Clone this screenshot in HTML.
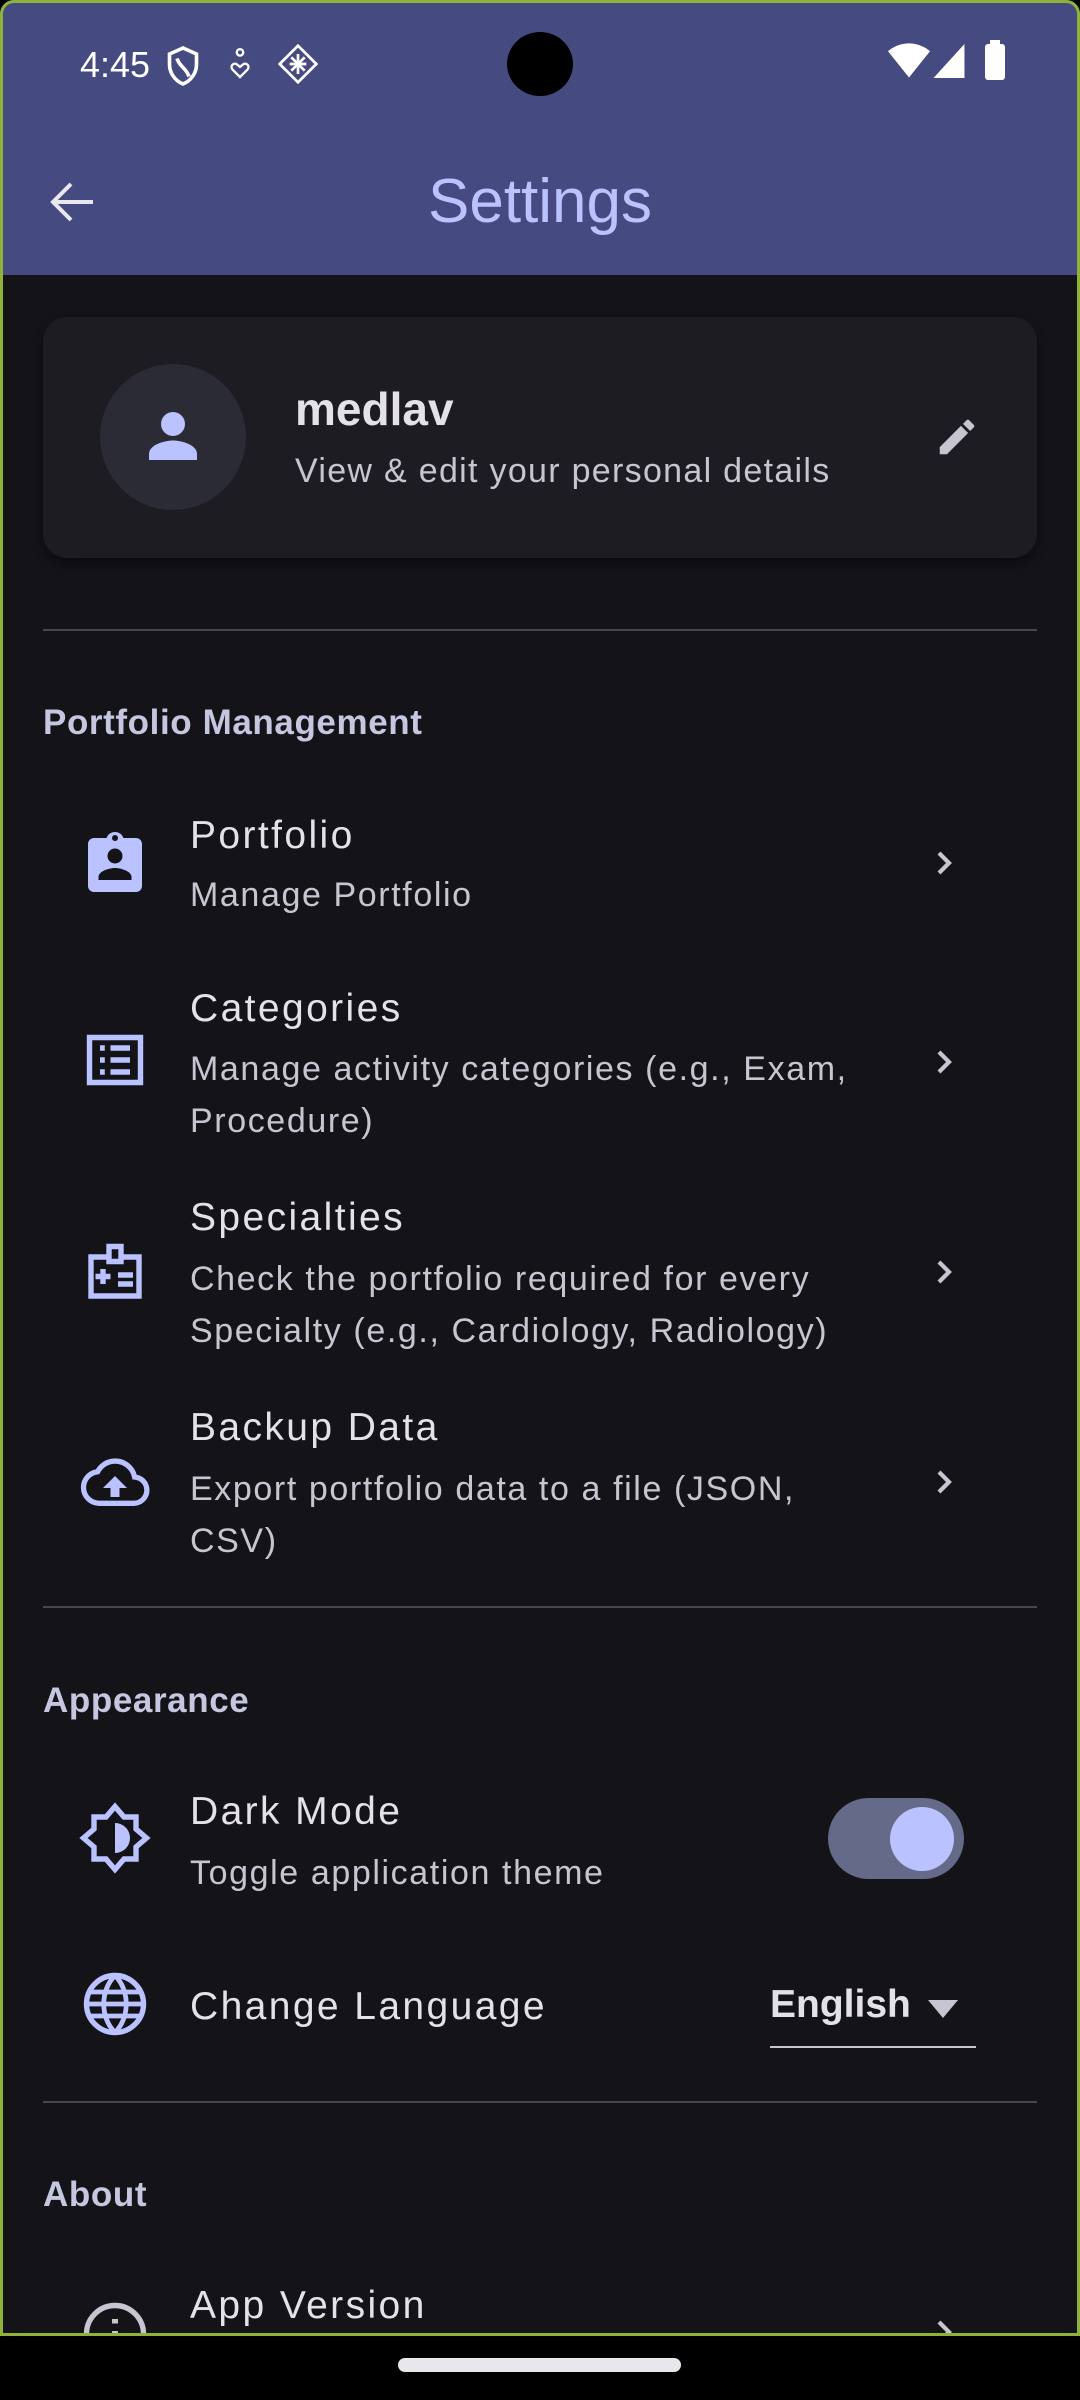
<!DOCTYPE html>
<html><head><meta charset="utf-8"><style>
*{margin:0;padding:0;box-sizing:border-box}
body{width:1080px;height:2400px;background:#000;position:relative;overflow:hidden;font-family:"Liberation Sans",sans-serif}
.screen{position:absolute;left:0;top:0;width:1080px;height:2336px;background:#141318;border-radius:14px 14px 0 0;overflow:hidden}
.frame{position:absolute;left:0;top:0;width:1080px;height:2336px;border:3px solid #8fb339;border-radius:14px 14px 0 0}
.bar{position:absolute;left:0;top:0;width:1080px;height:275px;background:#454b80}
.a{position:absolute;white-space:nowrap}
.t{font-size:39px;color:#e5e1e9;letter-spacing:2.4px;margin-top:3px}
.s{font-size:34px;color:#c7c5d0;letter-spacing:1.6px;line-height:52px;margin-top:3px}
.h{font-size:35px;color:#c5c6e0;font-weight:bold;left:43px;letter-spacing:0.6px;margin-top:3px}
.div{position:absolute;left:43px;width:994px;height:2px;background:#46464f}
.ic{position:absolute;left:79px;width:72px;height:72px}
.ch{position:absolute;left:924px;width:40px;height:40px}
</style></head><body>
<div class="screen">
<div class="bar"></div>
<div class="a" style="left:80px;top:44px;font-size:36px;color:#fff">4:45</div>
<svg class="a" style="left:165px;top:46px" width="36" height="40" viewBox="0 0 24 26"><path d="M12 1L3 5v7c0 6 4 11 9 13 5-2 9-7 9-13V5z M8 8c2 6 6 6 8 12" fill="none" stroke="#fff" stroke-width="2.4"/></svg>
<svg class="a" style="left:228px;top:48px" width="24" height="32" viewBox="0 0 16 22"><circle cx="8" cy="3" r="2.2" fill="none" stroke="#fff" stroke-width="1.6"/><path d="M8 20l-5-5c-2-2 0-5 2.5-4L8 13l2.5-2c2.5-1 4.5 2 2.5 4z" fill="none" stroke="#fff" stroke-width="1.6"/></svg>
<svg class="a" style="left:278px;top:44px" width="40" height="40" viewBox="0 0 24 24"><path d="M12 1L23 12 12 23 1 12z M7 12h10 M12 6v12 M8 8l8 8 M16 8l-8 8" fill="none" stroke="#fff" stroke-width="1.6"/></svg>
<div class="a" style="left:507px;top:32px;width:66px;height:64px;border-radius:50%;background:#000"></div>
<svg class="a" style="left:888px;top:42px" width="42" height="36" viewBox="0 0 24 20"><path d="M0 5C7-1 17-1 24 5L12 20z" fill="#fff"/></svg>
<svg class="a" style="left:933px;top:44px" width="32" height="34" viewBox="0 0 20 22"><path d="M20 0V22H0z" fill="#fff"/></svg>
<div class="a" style="left:985px;top:44px;width:20px;height:36px;background:#fff;border-radius:3px"></div>
<div class="a" style="left:990px;top:40px;width:10px;height:6px;background:#fff"></div>
<svg class="a" style="left:49px;top:180px" width="48" height="44" viewBox="0 0 24 22"><path d="M22 11H3 M11 2L2 11l9 9" fill="none" stroke="#e8e8f0" stroke-width="2"/></svg>
<div class="a" style="left:0;width:1080px;text-align:center;top:166px;font-size:62px;color:#bac3ff">Settings</div>

<div class="a" style="left:43px;top:317px;width:994px;height:241px;background:#1d1c22;border-radius:24px;box-shadow:0 6px 10px rgba(0,0,0,.4)"></div>
<div class="a" style="left:100px;top:364px;width:146px;height:146px;border-radius:50%;background:#2b2b35"></div>
<svg class="a" style="left:137px;top:400px" width="72" height="72" viewBox="0 0 24 24"><circle cx="12" cy="8" r="4" fill="#bac3ff"/><path d="M4 20v-2c0-3 5-4.5 8-4.5s8 1.5 8 4.5v2z" fill="#bac3ff"/></svg>
<div class="a" style="left:295px;top:382px;font-size:46px;font-weight:bold;color:#e5e1e9">medlav</div>
<div class="a" style="left:295px;top:452px;font-size:34px;color:#c7c5d0;letter-spacing:1.3px">View &amp; edit your personal details</div>
<svg class="a" style="left:934px;top:414px" width="46" height="46" viewBox="0 0 24 24"><path d="M3 17.25V21h3.75L17.8 9.94l-3.75-3.75z M20.7 7.04a1 1 0 000-1.41l-2.34-2.34a1 1 0 00-1.41 0l-1.83 1.83 3.75 3.75z" fill="#c7c5d0"/></svg>

<div class="div" style="top:629px"></div>
<div class="a h" style="top:700px">Portfolio Management</div>

<svg class="ic" style="top:826px" viewBox="0 0 24 24"><path d="M19 4h-4.2c-.4-1.2-1.5-2-2.8-2s-2.4.8-2.8 2H5c-1.1 0-2 .9-2 2v14c0 1.1.9 2 2 2h14c1.1 0 2-.9 2-2V6c0-1.1-.9-2-2-2z" fill="#bac3ff"/><circle cx="12" cy="4" r="1" fill="#141318"/><circle cx="12" cy="10" r="2.5" fill="#141318"/><path d="M6.5 18v-1c0-2 3.7-3 5.5-3s5.5 1 5.5 3v1z" fill="#141318"/></svg>
<div class="a t" style="left:190px;top:811px">Portfolio</div>
<div class="a s" style="left:190px;top:866px">Manage Portfolio</div>
<svg class="ch" style="top:843px" viewBox="0 0 24 24"><path d="M9 6l6 6-6 6" fill="none" stroke="#c7c5d0" stroke-width="2.5"/></svg>

<svg class="ic" style="top:1024px" viewBox="0 0 24 24"><path d="M3.5 4.5h17v15h-17z M7 8h1.6 M10.5 8h6.5 M7 12h1.6 M10.5 12h6.5 M7 16h1.6 M10.5 16h6.5" fill="none" stroke="#bac3ff" stroke-width="1.8"/></svg>
<div class="a t" style="left:190px;top:984px">Categories</div>
<div class="a s" style="left:190px;top:1040px">Manage activity categories (e.g., Exam,<br>Procedure)</div>
<svg class="ch" style="top:1042px" viewBox="0 0 24 24"><path d="M9 6l6 6-6 6" fill="none" stroke="#c7c5d0" stroke-width="2.5"/></svg>

<svg class="ic" style="top:1236px" viewBox="0 0 24 24"><path d="M10 7H4v13h16V7h-6 M10 3.5h4v5h-4z M5.5 13.5h5 M8 11v5 M13 13h5 M13 16h5" fill="none" stroke="#bac3ff" stroke-width="1.8"/></svg>
<div class="a t" style="left:190px;top:1193px">Specialties</div>
<div class="a s" style="left:190px;top:1250px">Check the portfolio required for every<br>Specialty (e.g., Cardiology, Radiology)</div>
<svg class="ch" style="top:1252px" viewBox="0 0 24 24"><path d="M9 6l6 6-6 6" fill="none" stroke="#c7c5d0" stroke-width="2.5"/></svg>

<svg class="ic" style="top:1446px" viewBox="0 0 24 24"><path d="M19.35 10.04A7.49 7.49 0 0012 4C9.11 4 6.6 5.64 5.35 8.04A6 6 0 000 14c0 3.31 2.690 6 6 6h13c2.76 0 5-2.24 5-5 0-2.64-2.05-4.78-4.65-4.96z" transform="translate(1.5 1.5) scale(.88)" fill="none" stroke="#bac3ff" stroke-width="2"/><path d="M12 10l-4 4h2.5v3h3v-3H16z" fill="#bac3ff"/></svg>
<div class="a t" style="left:190px;top:1403px">Backup Data</div>
<div class="a s" style="left:190px;top:1460px">Export portfolio data to a file (JSON,<br>CSV)</div>
<svg class="ch" style="top:1462px" viewBox="0 0 24 24"><path d="M9 6l6 6-6 6" fill="none" stroke="#c7c5d0" stroke-width="2.5"/></svg>

<div class="div" style="top:1606px"></div>
<div class="a h" style="top:1678px">Appearance</div>

<svg class="ic" style="top:1802px" viewBox="0 0 24 24"><path d="M12 1.5l3 3.5h4v4l3.5 3-3.5 3v4h-4l-3 3.5-3-3.5H5v-4L1.5 12 5 9V5h4z" fill="none" stroke="#bac3ff" stroke-width="1.8"/><path d="M12 7a5 5 0 010 10z" fill="#bac3ff"/></svg>
<div class="a t" style="left:190px;top:1787px">Dark Mode</div>
<div class="a s" style="left:190px;top:1844px">Toggle application theme</div>
<div class="a" style="left:828px;top:1798px;width:136px;height:81px;border-radius:41px;background:#646a87"></div>
<div class="a" style="left:890px;top:1807px;width:64px;height:64px;border-radius:50%;background:#bac3ff"></div>

<svg class="ic" style="top:1968px" viewBox="0 0 24 24"><circle cx="12" cy="12" r="9.5" fill="none" stroke="#bac3ff" stroke-width="1.8"/><path d="M2.5 12h19 M3.5 8h17 M3.5 16h17 M12 2.5c-5 5-5 14 0 19 M12 2.5c5 5 5 14 0 19" fill="none" stroke="#bac3ff" stroke-width="1.6"/></svg>
<div class="a t" style="left:190px;top:1982px">Change Language</div>
<div class="a" style="left:770px;top:1983px;font-size:39px;color:#e5e1e9;font-weight:bold">English</div>
<svg class="a" style="left:928px;top:2000px" width="30" height="18" viewBox="0 0 10 6"><path d="M0 0h10L5 6z" fill="#c7c5d0"/></svg>
<div class="a" style="left:770px;top:2046px;width:206px;height:2px;background:#c7c5d0"></div>

<div class="div" style="top:2101px"></div>
<div class="a h" style="top:2172px">About</div>
<svg class="ic" style="top:2298px" viewBox="0 0 24 24"><circle cx="12" cy="12" r="9.5" fill="none" stroke="#c7c5d0" stroke-width="1.8"/><path d="M12 7v1.5 M12 11v6" stroke="#c7c5d0" stroke-width="2"/></svg>
<div class="a t" style="left:190px;top:2281px">App Version</div>
<svg class="ch" style="top:2312px" viewBox="0 0 24 24"><path d="M9 6l6 6-6 6" fill="none" stroke="#c7c5d0" stroke-width="2.5"/></svg>
</div>
<div class="frame"></div>
<div class="a" style="left:398px;top:2358px;width:283px;height:14px;border-radius:7px;background:#e8e8ec"></div>
</body></html>
